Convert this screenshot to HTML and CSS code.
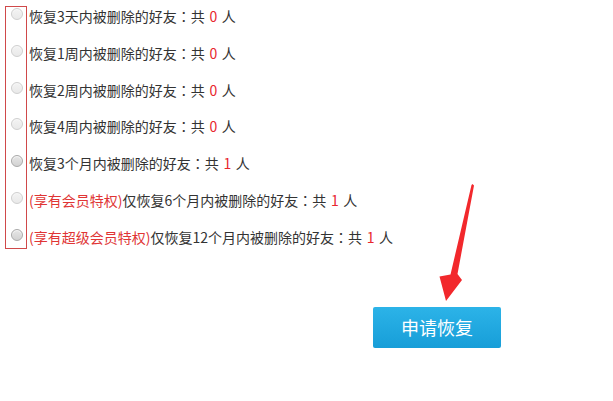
FILE: index.html
```html
<!DOCTYPE html>
<html lang="zh-CN">
<head>
<meta charset="utf-8">
<title>恢复好友</title>
<link rel="stylesheet" href="styles.css">
</head>
<body>
<div class="page">
  <div class="options">
    <div class="radios">
      <input class="radio off" type="radio" name="r">
      <input class="radio off" type="radio" name="r">
      <input class="radio off" type="radio" name="r">
      <input class="radio off" type="radio" name="r">
      <input class="radio" type="radio" name="r">
      <input class="radio off" type="radio" name="r">
      <input class="radio" type="radio" name="r">
    </div>
    <div class="labels">
      <div class="label">恢复3天内被删除的好友<span class="colon" lang="zh-TW">：</span>共 <span class="num">0</span> 人</div>
      <div class="label">恢复1周内被删除的好友<span class="colon" lang="zh-TW">：</span>共 <span class="num">0</span> 人</div>
      <div class="label">恢复2周内被删除的好友<span class="colon" lang="zh-TW">：</span>共 <span class="num">0</span> 人</div>
      <div class="label">恢复4周内被删除的好友<span class="colon" lang="zh-TW">：</span>共 <span class="num">0</span> 人</div>
      <div class="label">恢复3个月内被删除的好友<span class="colon" lang="zh-TW">：</span>共 <span class="num">1</span> 人</div>
      <div class="label"><span class="vip">(享有会员特权)</span>仅恢复6个月内被删除的好友<span class="colon" lang="zh-TW">：</span>共 <span class="num">1</span> 人</div>
      <div class="label"><span class="vip">(享有超级会员特权)</span>仅恢复12个月内被删除的好友<span class="colon" lang="zh-TW">：</span>共 <span class="num">1</span> 人</div>
    </div>
  </div>
  <div class="actions">
    <button class="btn" type="button">申请恢复</button>
  </div>
  <svg class="arrow" width="613" height="401" viewBox="0 0 613 401">
    <polygon points="472.5,184 474,185.5 457.5,274 462,280 446,301 439.5,276.5 450.5,274.5 471.5,185" fill="#f2282c"/>
  </svg>
</div>
</body>
</html>
```

FILE: styles.css
```css
html, body {
  margin: 0;
  padding: 0;
  background: #fff;
}

.page {
  position: relative;
  width: 613px;
  height: 401px;
  font-family: "Noto Sans CJK SC", "Microsoft YaHei", sans-serif;
  font-size: 14px;
  color: #333;
}

.options {
  display: flex;
  padding-top: 6px;
  padding-left: 5px;
}

.radios {
  display: flex;
  flex-direction: column;
  gap: 16.8px;
  width: 20px;
  border: 1px solid #d0494a;
}

.radio {
  -webkit-appearance: none;
  appearance: none;
  display: block;
  box-sizing: border-box;
  width: 12px;
  height: 12px;
  margin: 1px 0 7px 5px;
  border-radius: 50%;
  border: 1px solid #a9a9a9;
  background: linear-gradient(#e6e6e6, #d2d2d2);
  box-shadow: inset 0 1px 1px #f8f8f8;
}

.radio.off {
  border-color: #cfcfcf;
  background: linear-gradient(#f3f3f3, #e9e9e9);
}

.labels {
  display: flex;
  flex-direction: column;
  gap: 16.8px;
  margin-left: 2px;
}

.label {
  height: 20px;
  line-height: 20px;
  white-space: nowrap;
}

.colon {
  font-family: "Noto Sans CJK TC", "Noto Sans CJK SC", sans-serif;
}

.num {
  color: #e8262d;
  margin: 0 1.5px;
}

.vip {
  color: #e03535;
}

.actions {
  padding-left: 373px;
  margin-top: 58px;
}

.btn {
  width: 128px;
  height: 41px;
  border: none;
  border-radius: 2px;
  background: linear-gradient(#2cb3e8, #179ed8);
  color: #fff;
  font-family: "Noto Sans CJK SC", "Microsoft YaHei", sans-serif;
  font-size: 18px;
  padding: 0;
  cursor: pointer;
}

.arrow {
  position: absolute;
  left: 0;
  top: 0;
  pointer-events: none;
}
```
